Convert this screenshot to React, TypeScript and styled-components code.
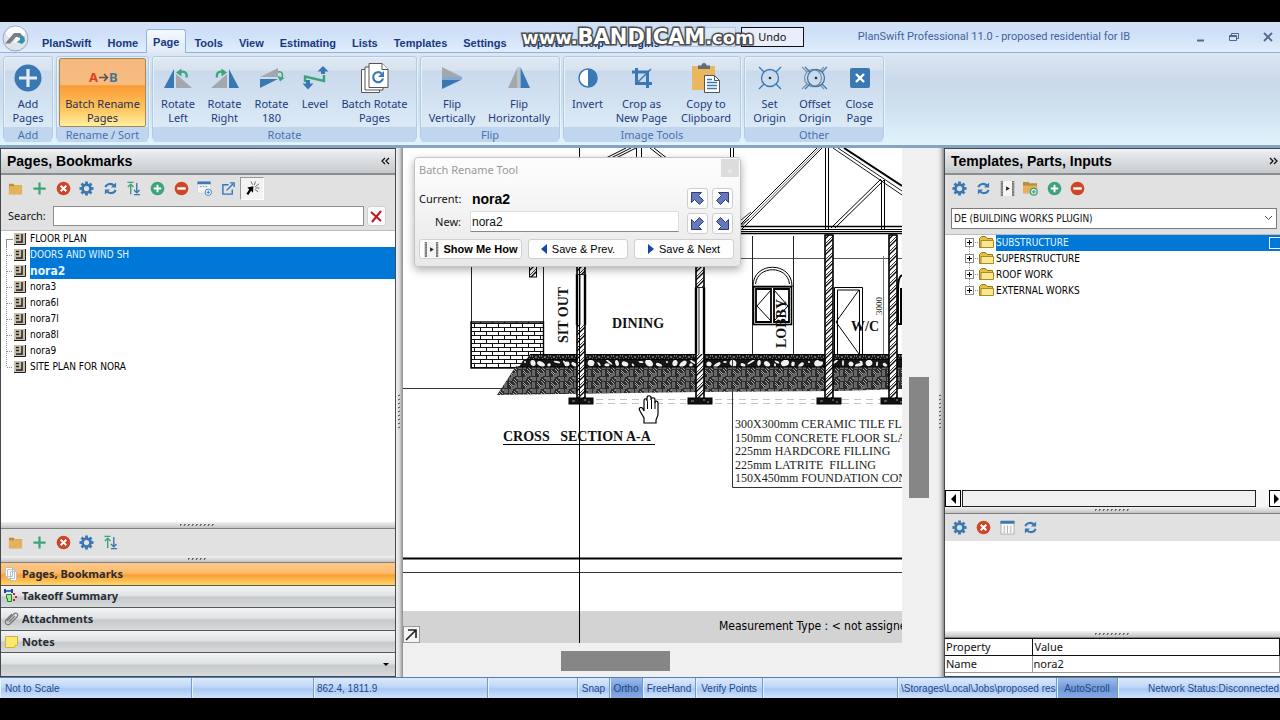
import React from "react";
import styled, { createGlobalStyle, css } from "styled-components";

const ui = '"Noto Sans", "Open Sans", sans-serif';
const tahoma = '"DejaVu Sans Condensed", "DejaVu Sans", sans-serif';
const arial = '"Liberation Sans", Arial, sans-serif';
const serif = '"Liberation Serif", "Times New Roman", serif';

const BLUE = "#3a78b4";
const GREEN = "#3da47a";
const RED = "#cf4528";
const GREY = "#a4a8ac";

const GlobalStyle = createGlobalStyle`
  *, *::before, *::after { box-sizing: border-box; }
  body { margin: 0; background: #000; font: 11px/14px ${ui}; color: #111; }
  button, input, select { font: inherit; color: inherit; margin: 0; }
  button { padding: 0; border: 0; background: none; }
  svg { display: block; flex: none; }
`;

const Shell = styled.div`
  min-height: 100vh;
  padding: 22px 0;
  background: #000;
  display: flex;
  flex-direction: column;
  overflow: hidden;
`;

/* ---------- Title bar and menu tabs ---------- */

const TitleBar = styled.header`
  position: relative;
  height: 31px;
  flex: none;
  display: flex;
  align-items: flex-end;
  background: linear-gradient(#d0e0f5 0, #cfe1f8 40%, #e0edfc 100%);
  border-bottom: 1px solid #8fb0dc;
`;
const Logo = styled.div`
  width: 34px;
  padding-left: 2px;
  align-self: flex-end;
`;
const Tabs = styled.nav`
  display: flex;
  align-items: flex-end;
  margin-bottom: -1px;
`;
const Tab = styled.button<{ $active?: boolean }>`
  height: ${(p) => (p.$active ? 24 : 20)}px;
  padding: 0 8px;
  font: bold 12px/20px ${arial};
  font-size: 11px;
  color: #17387f;
  white-space: nowrap;
  ${(p) =>
    p.$active &&
    css`
      padding: 0 6px;
      border: 1px solid #8fb4e6;
      border-bottom: 0;
      border-radius: 3px 3px 0 0;
      background: linear-gradient(#f4f9ff, #dfe9f5);
    `}
`;
const QuickTools = styled.div`
  display: flex;
  flex: none;
  gap: 5px;
  margin-left: 4px;
  padding-bottom: 5px;
`;
const GhostField = styled.div`
  width: 64px;
  height: 20px;
  border: 1px solid #b4c4dc;
  background: #dfe9f6;
`;
const UndoButton = styled.button`
  width: 63px;
  height: 20px;
  border: 1px solid #111;
  background: #e9effa;
  color: #111;
  font: 11px/14px ${ui};
`;
const WindowTitle = styled.div`
  margin-left: 54px;
  height: 31px;
  font: 11px/31px Roboto, ${ui};
  color: #44639b;
  white-space: nowrap;
`;
const WindowControls = styled.div`
  margin-left: auto;
  height: 31px;
  display: flex;
  align-items: center;
  gap: 22px;
  padding-right: 6px;
  color: #52698c;
`;
const Watermark = styled.div`
  position: absolute;
  left: 522px;
  top: 2px;
  font: bold 18px/26px "DejaVu Sans", sans-serif;
  color: #fff;
  white-space: nowrap;
  paint-order: stroke fill;
  -webkit-text-stroke: 3px #55585d;
  text-shadow: 0 0 3px #333;
  pointer-events: none;
  b { font-size: 21px; }
`;

/* ---------- Ribbon ---------- */

const Ribbon = styled.section`
  height: 95px;
  flex: none;
  display: flex;
  gap: 3px;
  padding: 3px 3px 5px;
  background: linear-gradient(#dde6f2 0, #c9d9ea 32%, #cfe0ef 60%, #e0f4fc 100%);
  border-bottom: 3px solid #86a3c4;
`;
const Group = styled.section`
  display: flex;
  flex-direction: column;
  border: 1px solid #b3cae3;
  border-radius: 3px;
  background: linear-gradient(#dfe8f3 0, #d8e3f0 16%, #c9d9ec 17%, #dbe9f6 82%);
  box-shadow: inset 1px 1px 0 #e8f1fa, 1px 1px 0 #e8f4fc;
`;
const GroupTools = styled.div`
  flex: 1;
  display: flex;
  padding: 1px 2px 0;
`;
const GroupLabel = styled.div`
  height: 15px;
  line-height: 15px;
  text-align: center;
  color: #4a72b0;
  background: #c0d6ee;
  border-radius: 0 0 3px 3px;
`;
const RibbonButton = styled.button<{ $w: number; $active?: boolean }>`
  width: ${(p) => p.$w}px;
  height: 69px;
  display: flex;
  flex-direction: column;
  align-items: center;
  padding-top: ${(p) => (p.$active ? 3 : 4)}px;
  line-height: 14px;
  color: #1b3c7d;
  white-space: pre-line;
  svg { margin-bottom: 3px; }
  ${(p) =>
    p.$active &&
    css`
      color: #2a2f50;
      border: 1px solid #a58a58;
      border-radius: 2px;
      background: linear-gradient(#f5b880 0, #f7bc80 38%, #fb9b35 40%, #fdc560 75%, #fff0a0 100%);
    `}
`;

/* ---------- Workspace ---------- */

const Workspace = styled.main`
  flex: 1;
  min-height: 529px;
  display: flex;
`;
const SidePanel = styled.aside<{ $w: number; $right?: boolean }>`
  width: ${(p) => p.$w}px;
  flex: none;
  display: flex;
  flex-direction: column;
  background: #fff;
  border: 1px solid #45484c;
  border-width: ${(p) => (p.$right ? "1px 0 1px 1px" : "1px")};
  overflow: hidden;
`;
const PanelHeader = styled.header<{ $tight?: boolean }>`
  height: 26px;
  flex: none;
  display: flex;
  align-items: center;
  justify-content: space-between;
  padding: 0 ${(p) => (p.$tight ? 2 : 5)}px 0 6px;
  background: linear-gradient(#eef0f2, #c6cacd);
  border-bottom: 2px solid #8b8e91;
`;
const PanelTitle = styled.h2`
  margin: 0;
  font: bold 14px/20px ${arial};
  color: #000;
`;
const ToolStrip = styled.div<{ $h: number }>`
  height: ${(p) => p.$h}px;
  flex: none;
  padding-left: 3px;
  background: #e1e1e1;
`;
const ToolGrid = styled.div`
  width: 260px;
  height: 100%;
  display: grid;
  grid-template-columns: repeat(11, 1fr);
  align-items: center;
`;
const ToolButton = styled.button<{ $pressed?: boolean }>`
  height: 23px;
  display: grid;
  place-items: center;
  ${(p) => p.$pressed && css`
    background: #f3f3f3;
    border: 1px solid #fff;
    border-top-color: #999;
    border-left-color: #999;
  `}
`;
const SearchRow = styled.div`
  height: 29px;
  flex: none;
  display: flex;
  align-items: flex-start;
  gap: 3px;
  padding: 4px 9px 0 7px;
  background: #e1e1e1;
  border-bottom: 1px solid #bbb;
`;
const SearchLabel = styled.label`
  width: 42px;
  line-height: 20px;
`;
const TextInput = styled.input`
  flex: 1;
  min-width: 0;
  height: 20px;
  border: 1px solid #8e8e8e;
  background: #fff;
  padding: 0 3px;
  outline: 0;
`;
const PushButton = styled.button`
  height: 20px;
  display: flex;
  align-items: center;
  justify-content: center;
  gap: 5px;
  border: 1px solid #cfcfcf;
  border-radius: 3px;
  background: #fdfdfd;
  color: #000;
`;
const ClearButton = styled(PushButton)`
  width: 19px;
`;
const Tree = styled.ul`
  flex: 1;
  margin: 0;
  padding: 0;
  list-style: none;
  font: 11px/16px ${tahoma};
  background: #fff;
  overflow: hidden;
`;
const TreeRow = styled.li<{ $indent?: number }>`
  height: 16px;
  display: flex;
  padding-left: ${(p) => p.$indent ?? 4}px;
  white-space: nowrap;
`;
const TreeText = styled.span<{ $selected?: boolean; $bold?: boolean }>`
  flex: 1;
  display: flex;
  justify-content: space-between;
  font-weight: ${(p) => (p.$bold ? "bold" : "normal")};
  font-size: ${(p) => (p.$bold ? 12 : 10)}px;
  color: ${(p) => (p.$selected ? "#e6f4ff" : "#000")};
  background: ${(p) => (p.$selected ? "#0078d7" : "none")};
`;
const RowCheck = styled.input`
  appearance: none;
  width: 12px;
  height: 12px;
  margin: 2px -1px;
  border: 1px solid #fff;
`;
const Grip = styled.div`
  height: 7px;
  flex: none;
  display: grid;
  place-items: center;
  background: linear-gradient(#f2f2f2, #c3c3c3);
  border-bottom: 1px solid #808080;
`;
const NavList = styled.nav`
  height: 113px;
  flex: none;
  display: grid;
  grid-template-rows: repeat(5, 1fr);
`;
const NavItem = styled.button<{ $active?: boolean }>`
  display: flex;
  align-items: center;
  gap: 3px;
  padding-left: 3px;
  font: bold 11px/16px ${ui};
  color: #262c33;
  border-bottom: 1px solid #55585b;
  background: ${(p) =>
    p.$active
      ? "linear-gradient(#fcc98c 0, #fdbb6c 45%, #fa9f35 55%, #fdd768 100%)"
      : "linear-gradient(#f2f4f5 0, #e0e3e5 45%, #c6cacd 55%, #d8dadb 100%)"};
  &:last-child { justify-content: flex-end; padding-right: 6px; border-bottom: 0; }
`;
const Splitter = styled.div`
  width: 7px;
  flex: none;
  display: flex;
  justify-content: center;
  padding-top: 246px;
  background: linear-gradient(90deg, #f4f4f4 0, #d8d8d8 50%, #8c8c8c 100%);
`;

/* ---------- Drawing area ---------- */

const Viewer = styled.section`
  position: relative;
  flex: 1;
  min-width: 0;
  display: grid;
  grid-template-columns: minmax(0, 1fr) 35px;
  grid-template-rows: minmax(0, 1fr) 34px;
  background: #f0f0f0;
`;
const Canvas = styled.div`
  position: relative;
  display: flex;
  flex-direction: column;
  background: #fff;
  overflow: hidden;
`;
const PlanSvg = styled.svg`
  width: 100%;
  flex: 1;
  min-height: 0;
`;
const MeasureBar = styled.div`
  height: 32px;
  flex: none;
  padding-left: 316px;
  background: #d3d3d3;
  font: 12px/30px ${tahoma};
  color: #000;
  white-space: nowrap;
  overflow: hidden;
`;
const CrosshairLine = styled.div`
  position: absolute;
  left: 176px;
  top: 0;
  bottom: 0;
  width: 1px;
  background: #000;
`;
const CornerButton = styled.button`
  position: absolute;
  left: 0;
  bottom: 0;
  width: 17px;
  height: 17px;
  display: grid;
  place-items: center;
  border: 1px solid #999;
  background: #f4f4f4;
`;
const VScroll = styled.div`
  padding: 229px 8px 0 7px;
  &::after { content: ""; display: block; height: 121px; background: #868686; }
`;
const HScroll = styled.div`
  padding: 8px 0 0 158px;
  &::after { content: ""; display: block; width: 109px; height: 20px; background: #868686; }
`;

/* ---------- Batch rename dialog ---------- */

const Dialog = styled.section`
  position: absolute;
  left: 11px;
  top: 9px;
  width: 327px;
  height: 110px;
  padding: 0 6px 7px 4px;
  border: 1px solid #c4c4c4;
  border-radius: 4px;
  background: linear-gradient(#fcfcfc 0, #fafafa 22%, #f0f0f0 60%, #e8e8e8 100%);
  box-shadow: 0 3px 9px rgba(0, 0, 0, 0.32);
`;
const DialogTitle = styled.div`
  display: flex;
  justify-content: space-between;
  height: 30px;
  margin-right: -5px;
  line-height: 24px;
  color: #9a9a9a;
`;
const CloseBox = styled.button`
  width: 18px;
  height: 18px;
  margin-top: 1px;
  background: #dcdcdc;
  color: #efefef;
`;
const DialogBody = styled.div`
  display: grid;
  grid-template-columns: minmax(0, 1fr) 47px;
  column-gap: 8px;
`;
const Fields = styled.div`
  display: grid;
  grid-template-columns: 42px minmax(0, 1fr);
  grid-template-rows: 22px 23px;
  column-gap: 9px;
  align-items: center;
  label, span { text-align: right; }
`;
const CurrentName = styled.strong`
  padding-left: 2px;
  font: bold 14px/20px ${arial};
  color: #000;
`;
const NameInput = styled(TextInput)`
  width: 100%;
  height: 21px;
  padding-left: 1px;
  border-color: #ddd;
  border-bottom-color: #888;
  font: 12px/16px ${arial};
`;
const ArrowPad = styled.div`
  display: grid;
  grid-template-columns: 21px 21px;
  grid-auto-rows: 21px;
  gap: 4px;
`;
const ArrowButton = styled(PushButton)`
  height: 21px;
`;
const DialogActions = styled.div`
  display: grid;
  grid-template-columns: 103px 100px 100px;
  gap: 6px;
  margin-top: 5px;
  font: 11px/14px ${arial};
`;
const StrongButton = styled(PushButton)`
  font-weight: bold;
`;

/* ---------- Right panel ---------- */

const SelectRow = styled.div`
  height: 33px;
  flex: none;
  padding: 6px 3px 0 6px;
  background: #e1e1e1;
  border-bottom: 1px solid #bbb;
`;
const SelectShell = styled.div`
  position: relative;
  svg { position: absolute; right: 4px; top: 7px; pointer-events: none; }
`;
const TemplateSelect = styled.select`
  appearance: none;
  width: 100%;
  height: 21px;
  border: 1px solid #7b7b7b;
  border-radius: 0;
  background: #fff;
  padding: 0 2px;
  font: 10px/16px ${tahoma};
`;
const TemplateScroll = styled.div`
  height: 17px;
  flex: none;
  display: grid;
  grid-template-columns: 16px minmax(0, 1fr) 16px;
  column-gap: 1px;
  margin-right: -5px;
  background: #f6f6f6;
  button { border: 1px solid #000; display: grid; place-items: center; background: #fff; }
  div { border: 1px solid #222; background: #f0f0f0; margin-right: 12px; }
`;
const Blank = styled.div`
  height: 90px;
  flex: none;
`;
const PropertyTable = styled.table`
  width: 100%;
  margin-bottom: 3px;
  border-collapse: collapse;
  table-layout: fixed;
  font: 11px/14px ${ui};
  th, td { text-align: left; font-weight: normal; padding: 0 1px; height: 17px; border-right: 1px solid #999; border-bottom: 1px solid #999; }
  th { border-color: #111; border-top: 1px solid #111; }
  th:last-child { padding-left: 2px; }
  th:first-child, td:first-child { width: 87px; }
`;

/* ---------- Status bar ---------- */

const StatusBar = styled.footer`
  height: 21px;
  flex: none;
  display: flex;
  background: linear-gradient(#dceafc 0, #bfd7f7 45%, #a9c8f2 55%, #cfe2fb 100%);
  border-top: 1px solid #567db0;
  font: 10px/21px ${arial};
  color: #23478c;
`;
const StatusCell = styled.div<{ $w?: number; $pad?: number; $on?: boolean; $center?: boolean }>`
  width: ${(p) => (p.$w ? `${p.$w}px` : "auto")};
  flex: ${(p) => (p.$w ? "none" : "1")};
  padding-left: ${(p) => p.$pad ?? 3}px;
  text-align: ${(p) => (p.$center ? "center" : "left")};
  border-right: 1px solid #6f9bd0;
  box-shadow: inset 1px 0 0 #e6f1ff;
  white-space: nowrap;
  overflow: hidden;
  background: ${(p) => (p.$on ? "linear-gradient(#9dbdec, #6f98d4 55%, #86ace4)" : "none")};
  &:last-child { border-right: 0; }
`;

/* ---------- Small icons ---------- */

type IconName =
  | "folder" | "plus" | "delete" | "gear" | "refresh" | "sort" | "add" | "remove"
  | "window" | "popout" | "pick" | "film" | "folderAdd" | "table";

const gearTeeth = [0, 45, 90, 135, 180, 225, 270, 315];

function Gear() {
  return (
    <g>
      {gearTeeth.map((a) => (
        <rect key={a} x="6.5" y="0.5" width="3" height="4" fill={BLUE} transform={`rotate(${a} 8 8)`} />
      ))}
      <circle cx="8" cy="8" r="4.200" fill="none" stroke={BLUE} strokeWidth="2.8" />
    </g>
  );
}

const glyphs: Record<IconName, React.ReactNode> = {
  folder: (
    <g>
      <path d="M1 3h5l1 1.500h8V14H1z" fill="#b98d42" />
      <path d="M1 5.500h5l1-1h8V14H1z" fill="#e5b25c" />
    </g>
  ),
  plus: <path d="M8 1.500v13M1.500 8h13" stroke={GREEN} strokeWidth="2.400" />,
  delete: (
    <g>
      <circle cx="8" cy="8" r="7.300" fill={RED} />
      <path d="M5 5l6 6M11 5l-6 6" stroke="#fff" strokeWidth="2.200" />
    </g>
  ),
  gear: <Gear />,
  refresh: (
    <g fill="none" stroke={BLUE} strokeWidth="2.200">
      <path d="M2.500 6.500C4 2.500 9 2 12 5" />
      <path d="M13.500 9.500C12 13.500 7 14 4 11" />
      <path d="M14 1.500v5.500H8.500zM2 14.500V9h5.500z" fill={BLUE} stroke="none" />
    </g>
  ),
  sort: (
    <g fill="none" strokeWidth="1.500">
      <path d="M1.500 1.500h6.500M5 14V4M2 6.500L5 3.500l3 3" stroke={GREEN} />
      <path d="M8.500 14.500h6.500M11.500 2v10M8.500 9.500l3 3L14.500 9.500" stroke={BLUE} />
    </g>
  ),
  add: (
    <g>
      <circle cx="8" cy="8" r="7.300" fill={GREEN} />
      <path d="M8 4v8M4 8h8" stroke="#fff" strokeWidth="2" />
    </g>
  ),
  remove: (
    <g>
      <circle cx="8" cy="8" r="7.300" fill={RED} />
      <path d="M3.500 8h9" stroke="#fff" strokeWidth="2.600" />
    </g>
  ),
  window: (
    <g>
      <path d="M.5 1h14v12H.5z" fill="#f4f6f8" stroke="#c2ccd6" strokeWidth=".6" />
      <path d="M.5 .5h14v3H.5z" fill={BLUE} />
      <path d="M3 6h8" stroke="#8b9299" strokeWidth="1" strokeDasharray="2 1" />
      <circle cx="12" cy="12" r="3.400" fill="#fff" stroke={BLUE} />
      <path d="M12 10v4M10 12h4" stroke={BLUE} />
    </g>
  ),
  popout: (
    <g fill="none" stroke="#2b78c0" strokeWidth="1.500">
      <path d="M8 4H2v10h10V9" />
      <path d="M6 10l7-7" />
      <path d="M9.500 2H14v4.500" />
    </g>
  ),
  pick: (
    <g>
      <path d="M2.500 7L9 5.500l-.5 7-2-2L3.500 15l-2-1.500L4.500 9z" fill="#000" />
      <path d="M8 4L6.500 .5M10 4.500L11 .5M11 6l4-3M11 7.500h4.500M10.500 9l3.500 2.500" stroke="#666" />
    </g>
  ),
  film: (
    <g>
      <path d="M1 0h14v16H1z" fill="#f4f4f4" />
      <path d="M2 0v16M14 0v16" stroke="#777" strokeWidth="2.400" />
      <path d="M2 1v15M14 1v15" stroke="#ddd" strokeDasharray="1 2" />
      <path d="M6.500 5.500L10.500 8l-4 2.500z" fill="#222" />
    </g>
  ),
  folderAdd: (
    <g>
      <path d="M0 1h6l1 1.500h8V13H0z" fill="#b98d42" />
      <path d="M0 5h15v8H0z" fill="#e5b25c" />
      <circle cx="11.500" cy="11.500" r="3.600" fill="#e9f5ef" stroke={GREEN} strokeWidth="1.400" />
      <path d="M11.500 9.500v4M9.500 11.500h4" stroke={GREEN} strokeWidth="1.300" />
    </g>
  ),
  table: (
    <g>
      <path d="M1 1h14v14H1z" fill="#f8f8f8" stroke="#a9b0b6" />
      <path d="M.5 1h15v3H.5z" fill={BLUE} />
      <path d="M4.500 6v8M8 6v8M11.500 6v8" stroke="#a9b0b6" />
    </g>
  ),
};

function Icon({ name, size = 15 }: { name: IconName; size?: number }) {
  return (
    <svg width={size} height={size} viewBox="0 0 16 16" aria-hidden="true">
      {glyphs[name]}
    </svg>
  );
}

function Dots({ count, vertical }: { count: number; vertical?: boolean }) {
  const length = count * 4;
  return (
    <svg width={vertical ? 3 : length} height={vertical ? length : 3} aria-hidden="true">
      {Array.from({ length: count }, (_, i) => (
        <path key={i} d={vertical ? `M0 ${i * 4 + 2}l2-1` : `M${i * 4} 2l1-2h1`} stroke="#444" fill="none" />
      ))}
    </svg>
  );
}

/* ---------- Ribbon icons ---------- */

const crossTicks = "M5 5l5 5M27 5l-5 5M5 27l5-5M27 27l-5-5";

const ribbonIcons: Record<string, React.ReactNode> = {
  add: (
    <g>
      <circle cx="16" cy="16" r="13.500" fill={BLUE} />
      <path d="M16 7v18M7 16h18" stroke="#e3ecf6" strokeWidth="3.200" />
    </g>
  ),
  rotateLeft: (
    <g>
      <path d="M12 7v19H2z" fill={BLUE} />
      <path d="M14 12v14h16z" fill={GREY} />
      <path d="M18 10.500c4-2 7.500 0 6.500 5" fill="none" stroke={GREEN} strokeWidth="2.200" />
      <path d="M14 10.500l5.500-4v8z" fill={GREEN} />
    </g>
  ),
  rotateRight: (
    <g>
      <path d="M20 7v19h10z" fill={BLUE} />
      <path d="M18 12v14H2z" fill={GREY} />
      <path d="M8 15.500c-1-5 2.500-7 6.500-5" fill="none" stroke={GREEN} strokeWidth="2.200" />
      <path d="M18 10.500l-5.500-4v8z" fill={GREEN} />
    </g>
  ),
  rotate180: (
    <g>
      <path d="M4 15L22 6v9z" fill={GREY} />
      <path d="M4 17h18L4 26z" fill={BLUE} />
      <path d="M22 10c4-1 5.500 2 4 6" fill="none" stroke={GREEN} strokeWidth="1.600" />
      <path d="M21.500 14l7 2-4.500 3.500z" fill={GREEN} />
    </g>
  ),
  level: (
    <g fill="none">
      <path d="M6 20v-5.500l19 4.500v-6" stroke={GREEN} strokeWidth="2.400" />
      <path d="M24 12V8" stroke={BLUE} strokeWidth="4" />
      <path d="M18.500 9.500L24 4l5.500 5.500z" fill={BLUE} />
      <path d="M9 18v4" stroke={BLUE} strokeWidth="4" />
      <path d="M3.500 21.500L9 27.500l5.500-6z" fill={BLUE} />
    </g>
  ),
  batchRotate: (
    <g stroke="#555" fill="#fff">
      <path d="M2.500 7.500h18v23h-18z" />
      <path d="M6 5h18v23H6z" />
      <path d="M10 1.500h13l6 6v18H10z" />
      <path d="M23 1.500v6h6" />
      <path d="M22.500 11.500a5 5 0 1 0 1.500 5" stroke={BLUE} strokeWidth="2.200" fill="none" />
      <path d="M25 9v6h-6z" fill={BLUE} stroke="none" />
    </g>
  ),
  flipV: (
    <g>
      <path d="M6 5v10h20z" fill={GREY} />
      <path d="M6 27V17.500h20z" fill={BLUE} />
      <path d="M6 16h20" stroke={BLUE} strokeWidth="1" />
    </g>
  ),
  flipH: (
    <g>
      <path d="M14.500 5v21H5z" fill={GREY} />
      <path d="M17.500 5v21H27z" fill={BLUE} />
      <path d="M16 5v21" stroke={GREY} />
    </g>
  ),
  invert: (
    <g>
      <circle cx="16" cy="16" r="9" fill="#fff" stroke={BLUE} strokeWidth="1.500" />
      <path d="M16 7a9 9 0 0 1 0 18z" fill={BLUE} />
    </g>
  ),
  crop: (
    <g fill="none" stroke={BLUE} strokeWidth="3">
      <path d="M10.500 6v15.500H26" />
      <path d="M6 10h15.500v16" />
      <path d="M11 21L25 7" strokeWidth="1.500" />
    </g>
  ),
  copy: (
    <g>
      <path d="M2 4h23v24H2z" fill="#e9b75d" />
      <path d="M8 7V3.500h3.500a2.500 2.500 0 0 1 5 0H20V7z" fill="#666b70" />
      <path d="M14.500 13.500h10l5 5v12h-15z" fill="#fff" stroke="#555" />
      <path d="M24.500 13.500v5h5" fill="none" stroke="#555" />
      <path d="M17 17.500h5M17 20.500h10M17 23.500h10M17 26.500h10" stroke={BLUE} strokeWidth="1.300" />
    </g>
  ),
  setOrigin: (
    <g fill="none" stroke={BLUE} strokeWidth="1.300">
      <circle cx="16" cy="16" r="8.500" />
      <path d={crossTicks} />
      <circle cx="16" cy="16" r=".7" fill="#234" stroke="#234" />
    </g>
  ),
  offsetOrigin: (
    <g fill="none" strokeWidth="1.300">
      <g stroke="#8b9299" transform="translate(-2 0)">
        <circle cx="16" cy="16" r="8.500" />
        <path d={crossTicks} />
      </g>
      <g stroke={BLUE} transform="translate(1 0)">
        <circle cx="16" cy="16" r="8.500" />
        <path d={crossTicks} />
        <circle cx="16" cy="16" r=".7" fill="#234" stroke="#234" />
      </g>
    </g>
  ),
  close: (
    <g>
      <rect x="6" y="6" width="20" height="20" rx="2" fill={BLUE} />
      <path d="M12 12l8 8M20 12l-8 8" stroke="#fff" strokeWidth="2.400" />
    </g>
  ),
};

function RenameIcon() {
  return (
    <svg width="32" height="32" viewBox="0 0 32 32" aria-hidden="true">
      <text x="2" y="20" fontFamily="Noto Sans, sans-serif" fontSize="13" fontWeight="bold" fill="#d9441f">A</text>
      <text x="22" y="20" fontFamily="Noto Sans, sans-serif" fontSize="13" fontWeight="bold" fill="#4a7397">B</text>
      <path d="M12 15.500h8M17 12l3.500 3.500L17 19" fill="none" stroke="#555" strokeWidth="1.600" />
    </svg>
  );
}

type Tool = { icon: string; label: string; w: number; active?: boolean };
const ribbonGroups: { name: string; tools: Tool[] }[] = [
  { name: "Add", tools: [{ icon: "add", label: "Add\nPages", w: 44 }] },
  { name: "Rename / Sort", tools: [{ icon: "rename", label: "Batch Rename\nPages", w: 87, active: true }] },
  {
    name: "Rotate",
    tools: [
      { icon: "rotateLeft", label: "Rotate\nLeft", w: 46 },
      { icon: "rotateRight", label: "Rotate\nRight", w: 47 },
      { icon: "rotate180", label: "Rotate\n180", w: 47 },
      { icon: "level", label: "Level", w: 40 },
      { icon: "batchRotate", label: "Batch Rotate\nPages", w: 79 },
    ],
  },
  {
    name: "Flip",
    tools: [
      { icon: "flipV", label: "Flip\nVertically", w: 58 },
      { icon: "flipH", label: "Flip\nHorizontally", w: 76 },
    ],
  },
  {
    name: "Image Tools",
    tools: [
      { icon: "invert", label: "Invert", w: 43 },
      { icon: "crop", label: "Crop as\nNew Page", w: 65 },
      { icon: "copy", label: "Copy to\nClipboard", w: 64 },
    ],
  },
  {
    name: "Other",
    tools: [
      { icon: "setOrigin", label: "Set\nOrigin", w: 45 },
      { icon: "offsetOrigin", label: "Offset\nOrigin", w: 46 },
      { icon: "close", label: "Close\nPage", w: 43 },
    ],
  },
];

/* ---------- Plan drawing ---------- */

function Column({ x, top }: { x: number; top: number }) {
  return (
    <g>
      <rect x={x - 4} y={top} width="8" height={399 - top} fill="#fff" />
      <rect x={x - 4} y={top} width="8" height={399 - top} fill="url(#wall)" stroke="#000" strokeWidth="1.200" />
      <rect x={x - 12} y="398" width="24" height="6" fill="#111" />
      <path d={`M${x - 9} 401h3M${x + 3} 400h2M${x + 7} 402h2`} stroke="#999" />
    </g>
  );
}

function Jamb({ x, top, bottom }: { x: number; top: number; bottom: number }) {
  return (
    <g stroke="#000">
      <rect x={x - 5} y={top} width="10" height={bottom - top} fill="#fff" stroke="none" />
      <path d={`M${x - 4} ${top}V${bottom}M${x + 4} ${top}V${bottom}`} strokeWidth="2.400" />
      <path d={`M${x - 1} ${top}V${bottom}M${x - 5} ${top}.5h10`} stroke="#222" />
    </g>
  );
}

const notes = [
  "300X300mm CERAMIC TILE FLOOR FINISH",
  "150mm CONCRETE FLOOR SLAB",
  "225mm HARDCORE FILLING",
  "225mm LATRITE  FILLING",
  "150X450mm FOUNDATION CONCRETE",
];

const stones = Array.from({ length: 52 }, (_, i) => ({
  x: 525 + i * 7 + ((i * 13) % 6),
  y: 363 + ((i * 5) % 4) - 1,
  rx: 1 + ((i * 7) % 5) * 0.8,
  ry: 1 + ((i * 3) % 4) * 0.7,
}));

function PlanDrawing() {
  return (
    <PlanSvg role="img" aria-label="Cross section A-A">
      <defs>
        <pattern id="wall" width="8" height="8" patternUnits="userSpaceOnUse">
          <path d="M0 8L8 0M-2 2L2 -2M6 10L10 6" stroke="#000" strokeWidth="1.300" />
          <path d="M-1 6L6 -1M2 11L11 2" stroke="#000" strokeWidth=".8" />
        </pattern>
        <pattern id="brick" x="471" y="323" width="12" height="8" patternUnits="userSpaceOnUse">
          <path d="M0 .5h12M0 4.500h12M3.500 0v4M9.500 4v4" stroke="#111" />
        </pattern>
        <pattern id="earth" width="14" height="12" patternUnits="userSpaceOnUse">
          <rect width="14" height="12" fill="#2c2c2c" />
          <path
            d="M0 1h3M0 3h3M5 0l3 3M6 -1l3 3M10 1v4M12 0v4M1 5v4M3 5v4M5 6h4M5 8h3M10 7l3 3M9 9l3 3M13 6h1M0 11h3M5 10l2 2M7 4h2M12 6h2"
            stroke="#c2c2c2"
            strokeWidth=".8"
          />
        </pattern>
        <pattern id="slab" width="9" height="5" patternUnits="userSpaceOnUse">
          <rect width="9" height="5" fill="#1a1a1a" />
          <path d="M1 1h1M4 2h2M2 4h1M7 4h1M8 1h1" stroke="#bbb" />
        </pattern>
      </defs>
      <g transform="translate(-403 -148)" fill="none" stroke="#000">
        {/* sheet frame and leader lines */}
        <path d="M403 388.500H902M403 572.500H2000" stroke="#333" />
        <path d="M403 558.500H2000" strokeWidth="2" />

        {/* roof truss */}
        <path d="M604 159L626 148M609 159L631 148M614 159L636 148M650 148l14 11M654 148l14 11" />
        <path d="M636.500 148v11M641.500 148v11M730.500 148v80M733.500 148v80" />
        <path d="M739 226L817 148M742 229L822 148" strokeWidth="1" />
        <path d="M740.500 227.500L819.500 148" strokeWidth=".5" />
        <path d="M825.500 148V229M828.500 148V229" />
        <path d="M833 148L902 195M838 148L902 191" strokeWidth=".9" />
        <path d="M844 148L902 186" strokeWidth="2" />
        <path d="M831 228L881 179M835 228L884 180M881.500 180V229M884.500 180V229" />
        <path d="M700 226.500H902M700 233.500H902" strokeWidth="1.600" />
        <path d="M700 229.500H902M700 231.500H902" />
        <path d="M741 258.500H902" stroke="#555" />
        <path d="M741 220l10-8M741 225l8-6" strokeWidth=".8" />

        {/* rooms */}
        <path d="M471.500 267V368M543.500 267V356M752.500 236V356M793.500 236V356" stroke="#222" />
        <rect x="529.500" y="262" width="7" height="15" fill="url(#wall)" />
        <rect x="471" y="322" width="72.500" height="46" fill="url(#brick)" strokeWidth="1.400" />
        <path d="M753 287v-1c0-25 39-25 39 0v1zM755.500 284c2-19 32-19 34 0" strokeWidth="1" />
        <rect x="753.500" y="286.500" width="38" height="38" strokeWidth="1.600" />
        <path d="M756 289h15v33h-15zM774 289h15v33h-15z" strokeWidth="1.800" />
        <path d="M771 290l-14 16 14 15M774 290l14 16-14 15" />
        <path d="M834.500 354v-66.500h28V354M837.500 354v-64h22V354M859 290l-23 32 23 32" />
        <path d="M883.500 256V354" stroke="#777" />
        <path d="M902 275c-5 3-4 10-4 49h4M901 288v35" strokeWidth="2" />

        {/* ground build-up */}
        <path d="M516 366H902V389L840 391L700 392L497 395z" fill="url(#earth)" stroke="none" />
        <path d="M530 354H902V360H526z" fill="url(#slab)" stroke="none" />
        <path d="M524 359H902V367H519z" fill="#161616" stroke="none" />
        {stones.map((s, i) => (
          <ellipse key={i} cx={s.x} cy={s.y} rx={s.rx} ry={s.ry} fill="#f0f0f0" stroke="none" transform={`rotate(${(i * 37) % 90 - 45} ${s.x} ${s.y})`} />
        ))}
        <path d="M530 354.500H902M526 359.500H902M518 367H902" />
        <path d="M596 399.500H686M715 399.500H815M842 399.500H880M596 403.500H686M715 403.500H815M842 403.500H880" stroke="#c4c4c4" strokeDasharray="7 5" />
        <Column x={581} top={262} />
        <Column x={700} top={262} />
        <Column x={829} top={235} />
        <Column x={893} top={235} />
        <Jamb x={581} top={274} bottom={325} />
        <Jamb x={700} top={287} bottom={354} />
        <path d="M732.500 356V487.500H2000" stroke="#333" />

        <g fill="#111" stroke="none" fontFamily={serif} fontWeight="bold" fontSize="14">
          <text x="612" y="328">DINING</text>
          <text transform="translate(568 343) rotate(-90)">SIT OUT</text>
          <text transform="translate(786 348) rotate(-90)">LOBBY</text>
          <text x="851" y="331">W/C</text>
          <text x="503" y="441" style={{ whiteSpace: "pre" }}>CROSS   SECTION A-A</text>
        </g>
        <path d="M503 444.500H655" />
        <g fill="#222" stroke="none" fontFamily={serif} fontSize="12">
          <text transform="translate(882 315) rotate(-90)" fontSize="9">3000</text>
          {notes.map((n, i) => (
            <text key={n} x="735" y={428 + Math.round(i * 13.5)} style={{ whiteSpace: "pre" }}>{n}</text>
          ))}
        </g>

        {/* pan cursor */}
        <path
          d="M644 423v-5l-4-7c-2-3 1-5 3-2l1 2v-10c0-3 3-3 3 0v-3c0-3 4-3 4 0v2c0-3 4-3 4 0v3c0-3 3-2 3 0v12l-2 5v3z"
          fill="#fff"
          strokeWidth="1.200"
        />
        <path d="M647.500 401v8M651.500 400v9M655 402v7" />
      </g>
    </PlanSvg>
  );
}

/* ---------- Tree items ---------- */

const pages = ["FLOOR PLAN", "DOORS AND WIND SH", "nora2", "nora3", "nora6l", "nora7l", "nora8l", "nora9", "SITE PLAN FOR NORA"];
const templates = ["SUBSTRUCTURE", "SUPERSTRUCTURE", "ROOF WORK", "EXTERNAL WORKS"];

function PageGlyph({ first, last }: { first: boolean; last: boolean }) {
  return (
    <svg width="25" height="16" aria-hidden="true">
      <path d={`M1.500 ${first ? 8 : 0}V${last ? 8 : 16}M2 8.500h6`} stroke="#909090" strokeDasharray={first ? undefined : "1 1"} fill="none" />
      <rect x="9" y="2" width="11" height="12" fill="#c9bfa8" />
      <path d="M9 13.500h11.500V2" stroke="#222" fill="none" />
      <path d="M11 4.500h3M11 7.500h3M17 3v8h-6" stroke="#222" strokeWidth="1.500" fill="none" />
    </svg>
  );
}

function FolderGlyph({ first, last }: { first: boolean; last: boolean }) {
  return (
    <svg width="31" height="16" aria-hidden="true">
      <path d={`M4.500 ${first ? 8 : 0}V${last ? 8 : 16}M8 7.500h5`} stroke="#999" strokeDasharray="1 1" />
      <rect x=".5" y="3.500" width="8" height="8" fill="#fff" stroke="#888" />
      <path d="M2 7.500h5M4.500 5v5" stroke="#000" />
      <path d="M14.500 12.500v-9l2-2h4l1.500 2h5.500v9z" fill="#e7bf45" stroke="#9a7b1e" />
      <path d="M16 5.500h12.500v7H16z" fill="#fbe88d" stroke="#a98a2c" />
    </svg>
  );
}

const navGlyphs = [
  <g key="pages" fill="#fff" stroke="#b9c3cf">
    <path d="M1.500 1.500h7v9h-7zM3.500 3.500h7v9h-7zM6.500 5.500h6v9h-6z" />
  </g>,
  <g key="takeoff" fill="none">
    <path d="M1 3h7" stroke="#1f3f9a" strokeWidth="1.500" />
    <path d="M1 1v4M8 1v4" stroke="#1f3f9a" strokeWidth="2" />
    <path d="M2.500 6.500h5v7h-4v-3h-1z" fill="#a9e59b" stroke="#178a1e" />
    <path d="M9 6h2M11 9h2M9 12h2" stroke="#c22" strokeWidth="2" />
  </g>,
  <path key="clip" d="M3 10l7-7c2-2 5 0 3 3l-7 7c-3 2-6-1-4-4l6-6M5 11l6-6" fill="none" stroke="#777" strokeWidth="1.200" />,
  <g key="note">
    <path d="M1.500 2.500h12v8l-3 3h-9z" fill="#fbe96f" stroke="#cdb13c" />
    <path d="M13.500 10.500h-3v3z" fill="#e3c33c" />
  </g>,
];
const navLabels = ["Pages, Bookmarks", "Takeoff Summary", "Attachments", "Notes"];

const pageTools: IconName[] = ["folder", "plus", "delete", "gear", "refresh", "sort", "add", "remove", "window", "popout", "pick"];
const bookmarkTools: IconName[] = ["folder", "plus", "delete", "gear", "sort"];
const templateTools: IconName[] = ["gear", "refresh", "film", "folderAdd", "add", "remove"];
const partTools: IconName[] = ["gear", "delete", "table", "refresh"];

function Tools({ items, height }: { items: IconName[]; height: number }) {
  return (
    <ToolStrip $h={height}>
      <ToolGrid>
        {items.map((n) => (
          <ToolButton key={n} aria-label={n} $pressed={n === "pick"}>
            <Icon name={n} />
          </ToolButton>
        ))}
      </ToolGrid>
    </ToolStrip>
  );
}

function Chevrons({ flip }: { flip?: boolean }) {
  return (
    <svg width="9" height="8" viewBox="0 0 9 8" aria-hidden="true">
      <path d={flip ? "M1 1l3 3-3 3M5 1l3 3-3 3" : "M4 1L1 4l3 3M8 1L5 4l3 3"} fill="none" stroke="#111" strokeWidth="1.300" />
    </svg>
  );
}

const arrowAngles = [0, 90, 270, 180];

export default function App() {
  return (
    <Shell>
      <GlobalStyle />
      <TitleBar>
        <Logo>
          <svg width="27" height="27" viewBox="0 0 27 27" aria-hidden="true">
            <circle cx="13.500" cy="13.500" r="12.500" fill="#dfe4ea" stroke="#98a5b5" />
            <ellipse cx="13.500" cy="8" rx="9.500" ry="6.500" fill="#fafbfc" />
            <path d="M3 18.500L12 8h6l5 5-3 3-4-4h-2l-6 6.500z" fill="#7b7f84" />
            <path d="M17 9.500l5 2.500 1 4-3 3-5-2 3-2z" fill="#2a93ad" />
            <path d="M12 17.500l6-4.500" stroke="#fff" strokeWidth="1.500" />
          </svg>
        </Logo>
        <Tabs>
          {["PlanSwift", "Home", "Page", "Tools", "View", "Estimating", "Lists", "Templates", "Settings", "Reports", "Help", "Plugins"].map((t) => (
            <Tab key={t} $active={t === "Page"}>{t}</Tab>
          ))}
        </Tabs>
        <QuickTools>
          <GhostField />
          <UndoButton>Undo</UndoButton>
        </QuickTools>
        <WindowTitle>PlanSwift Professional 11.0 - proposed residential for IB</WindowTitle>
        <WindowControls>
          <button aria-label="Minimize">
            <svg width="12" height="12"><path d="M3 9.500h7" stroke="currentColor" strokeWidth="2" /></svg>
          </button>
          <button aria-label="Restore">
            <svg width="12" height="12">
              <path d="M3.500 4V2.500h7v5H9M1.500 4.500h7v5h-7zM1.500 5.500h7" fill="none" stroke="currentColor" />
            </svg>
          </button>
          <button aria-label="Close">
            <svg width="12" height="12"><path d="M2 2l8 8M10 2l-8 8" stroke="currentColor" strokeWidth="1.800" /></svg>
          </button>
        </WindowControls>
        <Watermark>www.<b>BANDICAM</b>.com</Watermark>
      </TitleBar>

      <Ribbon>
        {ribbonGroups.map((g) => (
          <Group key={g.name}>
            <GroupTools>
              {g.tools.map((t) => (
                <RibbonButton key={t.icon} $w={t.w} $active={t.active}>
                  {t.icon === "rename" ? (
                    <RenameIcon />
                  ) : (
                    <svg width="32" height="32" viewBox="0 0 32 32" aria-hidden="true">{ribbonIcons[t.icon]}</svg>
                  )}
                  {t.label}
                </RibbonButton>
              ))}
            </GroupTools>
            <GroupLabel>{g.name}</GroupLabel>
          </Group>
        ))}
      </Ribbon>

      <Workspace>
        <SidePanel $w={396}>
          <PanelHeader>
            <PanelTitle>Pages, Bookmarks</PanelTitle>
            <button aria-label="Collapse panel"><Chevrons /></button>
          </PanelHeader>
          <Tools items={pageTools} height={27} />
          <SearchRow>
            <SearchLabel htmlFor="search">Search:</SearchLabel>
            <TextInput id="search" />
            <ClearButton aria-label="Clear search">
              <svg width="13" height="13"><path d="M1 2l10 9M11 1L2 12" stroke="#c4161c" strokeWidth="2" /></svg>
            </ClearButton>
          </SearchRow>
          <Tree>
            {pages.map((p, i) => (
              <TreeRow key={p}>
                <PageGlyph first={i === 0} last={i === pages.length - 1} />
                <TreeText $selected={i === 1 || i === 2} $bold={i === 2}>{p}</TreeText>
              </TreeRow>
            ))}
          </Tree>
          <Grip><Dots count={9} /></Grip>
          <Tools items={bookmarkTools} height={27} />
          <Grip><Dots count={5} /></Grip>
          <NavList>
            {navLabels.map((n, i) => (
              <NavItem key={n} $active={i === 0}>
                <svg width="15" height="16" aria-hidden="true">{navGlyphs[i]}</svg>
                {n}
              </NavItem>
            ))}
            <NavItem aria-label="More panes">
              <svg width="6" height="4"><path d="M0 0h6L3 3z" fill="#000" /></svg>
            </NavItem>
          </NavList>
        </SidePanel>

        <Splitter><Dots count={9} vertical /></Splitter>

        <Viewer>
          <Canvas>
            <PlanDrawing />
            <MeasureBar>Measurement Type : &lt; not assigned &gt;</MeasureBar>
            <CrosshairLine />
            <CornerButton aria-label="Expand">
              <svg width="13" height="13"><path d="M1 12L11 2M3 2h8v8" fill="none" stroke="#222" strokeWidth="1.600" /></svg>
            </CornerButton>
          </Canvas>
          <VScroll />
          <HScroll />
          <Dialog>
            <DialogTitle>
              Batch Rename Tool
              <CloseBox aria-label="Close dialog">×</CloseBox>
            </DialogTitle>
            <DialogBody>
              <Fields>
                <span>Current:</span>
                <CurrentName>nora2</CurrentName>
                <label htmlFor="new-name">New:</label>
                <NameInput id="new-name" defaultValue="nora2" />
              </Fields>
              <ArrowPad>
                {arrowAngles.map((a) => (
                  <ArrowButton key={a} aria-label={`Move ${a}`}>
                    <svg width="15" height="15" viewBox="0 0 15 15">
                      <path d="M1.500 1.500h10l-3 3 5 5-4 4-5-5-3 3z" fill="#6678bd" stroke="#2f3c78" transform={`rotate(${a} 7.500 7.500)`} />
                    </svg>
                  </ArrowButton>
                ))}
              </ArrowPad>
            </DialogBody>
            <DialogActions>
              <StrongButton><Icon name="film" size={15} />Show Me How</StrongButton>
              <PushButton>
                <svg width="6" height="10"><path d="M6 0v10L0 5z" fill="#1246a8" /></svg>
                Save &amp; Prev.
              </PushButton>
              <PushButton>
                <svg width="6" height="10"><path d="M0 0v10l6-5z" fill="#1246a8" /></svg>
                Save &amp; Next
              </PushButton>
            </DialogActions>
          </Dialog>
        </Viewer>

        <Splitter><Dots count={9} vertical /></Splitter>

        <SidePanel $w={336} $right>
          <PanelHeader $tight>
            <PanelTitle>Templates, Parts, Inputs</PanelTitle>
            <button aria-label="Collapse panel"><Chevrons flip /></button>
          </PanelHeader>
          <Tools items={templateTools} height={27} />
          <SelectRow>
            <SelectShell>
              <TemplateSelect aria-label="Template set">
                <option>DE (BUILDING WORKS PLUGIN)</option>
              </TemplateSelect>
              <svg width="9" height="6"><path d="M1 1l3.500 3.500L8 1" fill="none" stroke="#555" /></svg>
            </SelectShell>
          </SelectRow>
          <Tree>
            {templates.map((t, i) => (
              <TreeRow key={t} $indent={20}>
                <FolderGlyph first={i === 0} last={i === templates.length - 1} />
                <TreeText $selected={i === 0}>
                  {t}
                  {i === 0 && <RowCheck type="checkbox" aria-label="Select SUBSTRUCTURE" />}
                </TreeText>
              </TreeRow>
            ))}
          </Tree>
          <TemplateScroll>
            <button aria-label="Scroll left"><svg width="6" height="10"><path d="M6 0v10L1 5z" /></svg></button>
            <div />
            <button aria-label="Scroll right"><svg width="6" height="10"><path d="M0 0v10l5-5z" /></svg></button>
          </TemplateScroll>
          <Grip><Dots count={9} /></Grip>
          <Tools items={partTools} height={27} />
          <Blank />
          <Grip><Dots count={9} /></Grip>
          <PropertyTable>
            <thead><tr><th>Property</th><th>Value</th></tr></thead>
            <tbody><tr><td>Name</td><td>nora2</td></tr></tbody>
          </PropertyTable>
        </SidePanel>
      </Workspace>

      <StatusBar>
        <StatusCell $w={192} $pad={5}>Not to Scale</StatusCell>
        <StatusCell $w={122} />
        <StatusCell $w={174}>862.4, 1811.9</StatusCell>
        <StatusCell $w={90} />
        <StatusCell $w={32} $pad={0} $center>Snap</StatusCell>
        <StatusCell $w={33} $pad={0} $center $on>Ortho</StatusCell>
        <StatusCell $w={53} $pad={0} $center>FreeHand</StatusCell>
        <StatusCell $w={67} $pad={0} $center>Verify Points</StatusCell>
        <StatusCell />
        <StatusCell $w={159}>\Storages\Local\Jobs\proposed residential</StatusCell>
        <StatusCell $w={61} $pad={0} $center $on>AutoScroll</StatusCell>
        <StatusCell $w={162} $pad={30}>Network Status:Disconnected</StatusCell>
      </StatusBar>
    </Shell>
  );
}
